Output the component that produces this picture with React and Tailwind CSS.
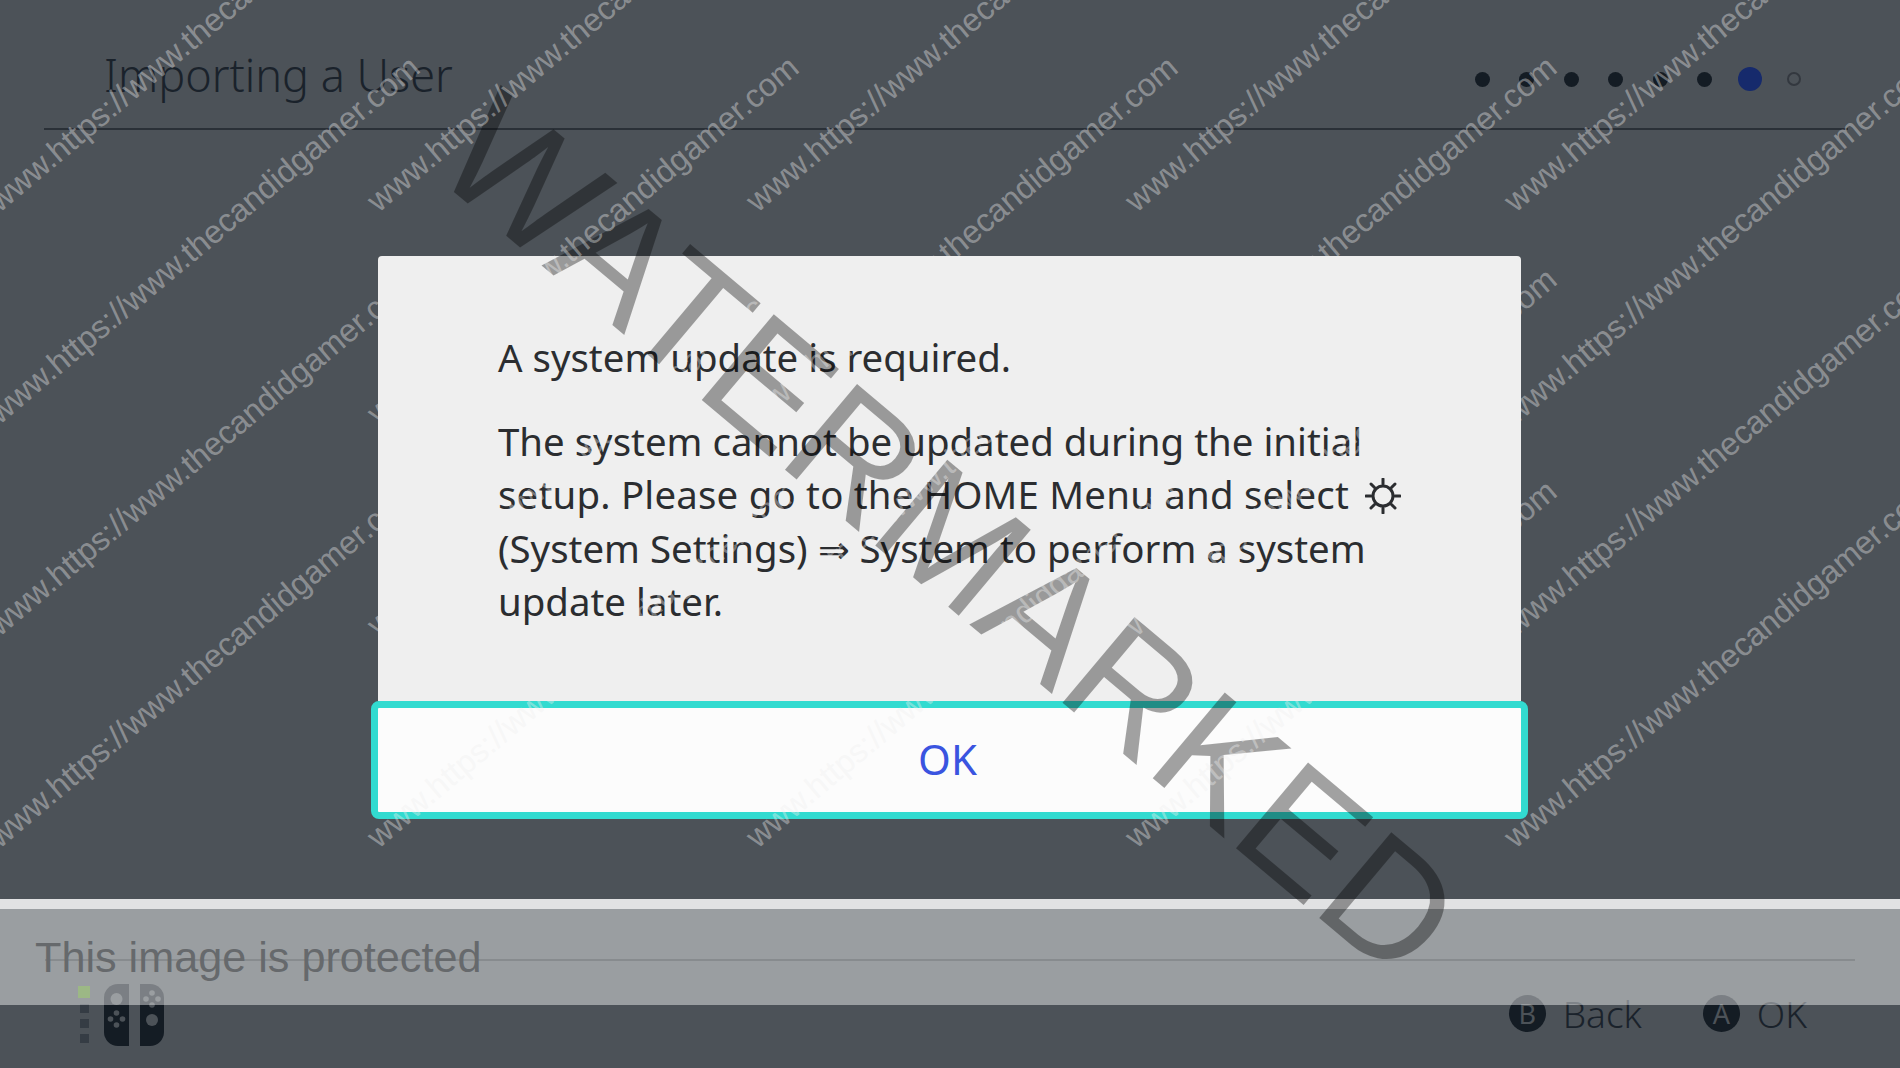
const starts = [];
for (const y of [217, 429, 641, 853]) {
  for (const x of [3, 382, 761, 1140, 1519]) starts.push({ x, y });
}

function Gear() {
  const teeth = [0, 45, 90, 135, 180, 225, 270, 315];
  return (
    <svg viewBox="0 0 36 36" className="inline-block w-[36px] h-[36px] ml-[16px] align-[-5px]" fill="none" stroke="#2b2d30">
      <circle cx="18" cy="18" r="10" strokeWidth="3" />
      {teeth.map((a) => (
        <line key={a} x1="18" y1="6" x2="18" y2="1" strokeWidth="3" strokeLinecap="round" transform={`rotate(${a} 18 18)`} />
      ))}
    </svg>
  );
}

function JoyCons() {
  return (
    <div className="flex items-center gap-[14px]">
      <div className="flex flex-col gap-[6px] items-center w-[12px]">
        <div className="w-[12px] h-[12px] bg-[#4f8026]" />
        <div className="w-[9px] h-[9px] bg-[#353c44]" />
        <div className="w-[9px] h-[9px] bg-[#353c44]" />
        <div className="w-[9px] h-[9px] bg-[#353c44]" />
      </div>
      <svg viewBox="0 0 60 62" className="w-[60px] h-[62px]">
        <path d="M25 0v62H14A14 14 0 0 1 0 48V14A14 14 0 0 1 14 0z" fill="#141c24" />
        <path d="M36 0v62h10a14 14 0 0 0 14-14V14A14 14 0 0 0 46 0z" fill="#141c24" />
        <circle cx="12.5" cy="15" r="6" fill="#4c5258" />
        <circle cx="12.5" cy="29" r="2.8" fill="#4c5258" />
        <circle cx="12.5" cy="41" r="2.8" fill="#4c5258" />
        <circle cx="6.5" cy="35" r="2.8" fill="#4c5258" />
        <circle cx="18.5" cy="35" r="2.8" fill="#4c5258" />
        <circle cx="48" cy="9" r="2.8" fill="#4c5258" />
        <circle cx="48" cy="21" r="2.8" fill="#4c5258" />
        <circle cx="42" cy="15" r="2.8" fill="#4c5258" />
        <circle cx="54" cy="15" r="2.8" fill="#4c5258" />
        <circle cx="48" cy="36" r="6" fill="#4c5258" />
      </svg>
    </div>
  );
}

function Hint({ k, label }) {
  return (
    <div className="flex items-center gap-[17px]">
      <span className="w-[37px] h-[37px] rounded-full bg-[#141c24] text-[#4c5258] flex items-center justify-center text-[27px] font-normal leading-none">{k}</span>
      <span className="text-[37px] leading-none text-[#1a222b] font-light">{label}</span>
    </div>
  );
}

export default function App() {
  return (
    <div className="relative w-[1900px] h-[1068px] overflow-hidden bg-[#4c5258] flex flex-col font-['Noto_Sans',sans-serif]">
      <header className="h-[130px] mx-[44px] w-[1804px] border-b-2 border-[#2a3037] flex items-center justify-between shrink-0 pl-[60px] pr-[47px]">
        <h1 className="text-[45px] leading-none text-[#1a222b] font-light pt-[21px]">Importing a User</h1>
        <div className="flex items-center gap-[29.5px] pt-[30px]">
          <span className="w-[15px] h-[15px] rounded-full bg-[#141c24]" />
          <span className="w-[15px] h-[15px] rounded-full bg-[#141c24]" />
          <span className="w-[15px] h-[15px] rounded-full bg-[#141c24]" />
          <span className="w-[15px] h-[15px] rounded-full bg-[#141c24]" />
          <span className="w-[15px] h-[15px] rounded-full bg-[#141c24]" />
          <span className="w-[15px] h-[15px] rounded-full bg-[#141c24]" />
          <span className="w-[24px] h-[24px] rounded-full bg-[#162a6c] -mx-[4px]" />
          <span className="w-[14px] h-[14px] rounded-full border-2 border-[#33383f]" />
        </div>
      </header>

      <main className="flex-1 flex justify-center pt-[126px] pr-[1px]">
        <div className="w-[1143px] h-[563px] flex flex-col">
          <div className="flex-1 bg-[#efefef] rounded-t-[4px] px-[120px] pt-[75px] text-[#2b2d30] text-[38.4px] leading-[53.5px]">
            <p className="mb-[30px]">A system update is required.</p>
            <p>
              The system cannot be updated during the initial<br />
              <span className="tracking-[0.2px]">setup. Please go to the HOME Menu and select</span><Gear /><br />
              (System Settings) ⇒ System to perform a system<br />
              update later.
            </p>
          </div>
          <button className="-mx-[7px] h-[118px] shrink-0 bg-[#fcfcfc] border-[7px] border-[#32dbd0] rounded-[8px] text-[#3a54e0] text-[42px] leading-none font-normal pb-[2px] pr-[4px]">OK</button>
        </div>
      </main>

      <footer className="h-[109px] shrink-0 ml-[45px] w-[1810px] border-t-2 border-[#2a3037] flex items-center justify-between pl-[33px] pr-[48px]">
        <JoyCons />
        <div className="flex items-center gap-[61px] pb-[2px]">
          <Hint k="B" label="Back" />
          <Hint k="A" label="OK" />
        </div>
      </footer>

      {/* translucent protection band over the footer */}
      <div className="absolute left-0 right-0 top-[899px] h-[106px] flex flex-col">
        <div className="h-[10px] bg-[#ffffff]/[0.83]" />
        <div className="flex-1 bg-[#ffffff]/[0.44] pl-[35px] pt-[27px] text-[43.2px] leading-none text-[#66696c] font-['Liberation_Sans',sans-serif]">This image is protected</div>
      </div>

      {/* big diagonal watermark */}
      <div className="absolute inset-0 flex items-center justify-center pointer-events-none">
        <div className="rotate-[40deg] text-[163px] leading-none whitespace-nowrap text-[#000000]/[0.36] font-['Liberation_Sans',sans-serif]">WATERMARKED</div>
      </div>

      {/* repeated small watermark */}
      {starts.map((s) => (
        <div
          key={`${s.x}-${s.y}`}
          className="absolute origin-bottom-left -rotate-[40deg] whitespace-nowrap text-[32.3px] leading-none text-[#efefef]/[0.4] pointer-events-none font-['Liberation_Sans',sans-serif]"
          style={{ left: s.x, top: s.y - 32 }}
        >
          www.https://www.thecandidgamer.com
        </div>
      ))}
    </div>
  );
}
